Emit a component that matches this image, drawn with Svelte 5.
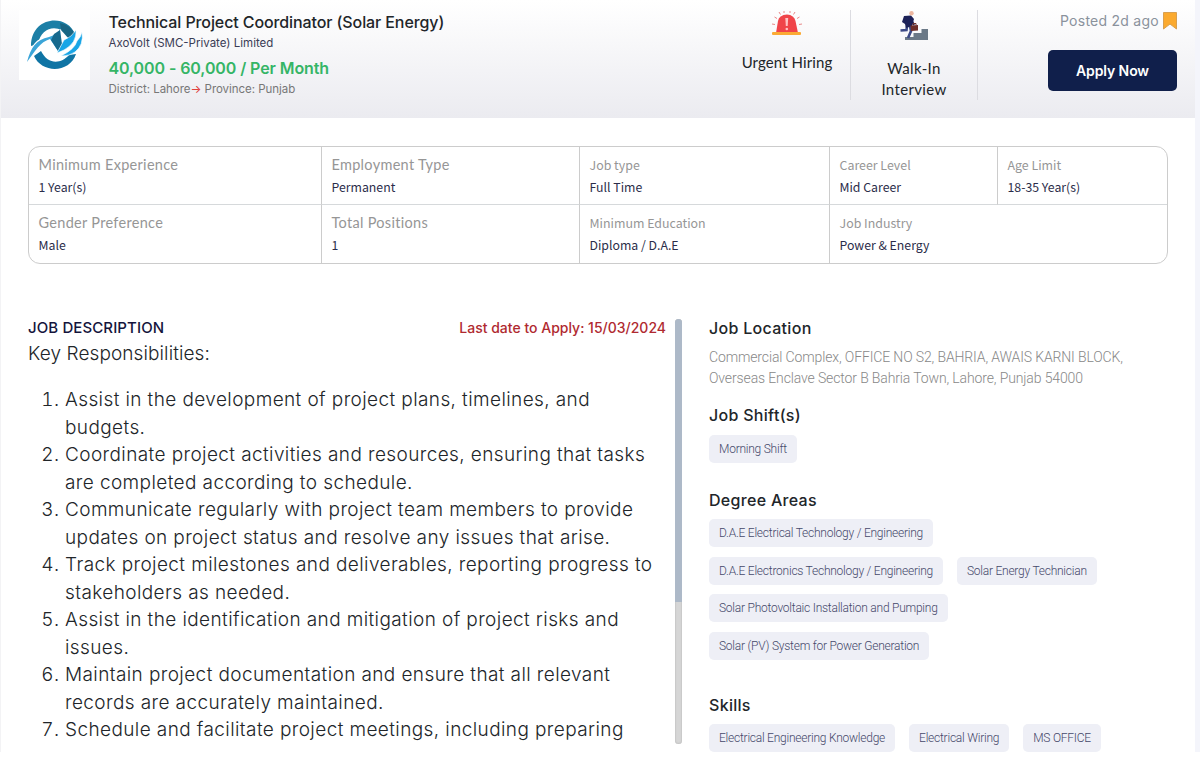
<script>
	const facts = [
		{ label: 'Minimum Experience', value: '1 Year(s)', wide: true },
		{ label: 'Employment Type', value: 'Permanent', wide: true },
		{ label: 'Job type', value: 'Full Time' },
		{ label: 'Career Level', value: 'Mid Career' },
		{ label: 'Age Limit', value: '18-35 Year(s)' },
		{ label: 'Gender Preference', value: 'Male', wide: true },
		{ label: 'Total Positions', value: '1', wide: true },
		{ label: 'Minimum Education', value: 'Diploma / D.A.E' },
		{ label: 'Job Industry', value: 'Power & Energy', last: true }
	]

	const duties = [
		['Assist in the development of project plans, timelines, and', 'budgets.'],
		['Coordinate project activities and resources, ensuring that tasks', 'are completed according to schedule.'],
		['Communicate regularly with project team members to provide', 'updates on project status and resolve any issues that arise.'],
		['Track project milestones and deliverables, reporting progress to', 'stakeholders as needed.'],
		['Assist in the identification and mitigation of project risks and', 'issues.'],
		['Maintain project documentation and ensure that all relevant', 'records are accurately maintained.'],
		['Schedule and facilitate project meetings, including preparing']
	]

	const degrees = [
		['D.A.E Electrical Technology / Engineering'],
		['D.A.E Electronics Technology / Engineering', 'Solar Energy Technician'],
		['Solar Photovoltaic Installation and Pumping'],
		['Solar (PV) System for Power Generation']
	]

	const skills = ['Electrical Engineering Knowledge', 'Electrical Wiring', 'MS OFFICE']
</script>

<style>
	:global(body) {
		background: #fff;
	}
	.page {
		border-left: 1px solid #f3f3f5;
		border-right: 5px solid #f4f5fb;
		box-sizing: border-box;
		color: #212529;
		font-family: Inter, sans-serif;
		height: 752px;
		overflow: hidden;
		width: 1200px;
	}

	header {
		background: linear-gradient(#fff, #ebebf0);
		box-sizing: border-box;
		display: flex;
		height: 118px;
		padding: 10px 18px 0;
	}
	.logo {
		background: #fff;
		height: 70px;
		width: 71px;
	}
	.summary {
		flex: 1;
		padding-left: 18.5px;
		white-space: nowrap;
	}
	h1 {
		font-size: 16px;
		font-weight: 500;
		letter-spacing: -.1px;
		line-height: 25px;
		margin: 0;
	}
	.company {
		color: #3b3c55;
		font-size: 11.5px;
		line-height: 16px;
	}
	.salary {
		color: #35b566;
		font-size: 16px;
		font-weight: 600;
		letter-spacing: -.1px;
		line-height: 35px;
	}
	.place {
		color: #777;
		font-size: 11.5px;
		letter-spacing: -.04px;
		line-height: 6px;
	}
	.place span {
		color: #e0403c;
	}
	.tag {
		border-right: 1px solid #dcdce1;
		box-sizing: border-box;
		font-family: Lato, sans-serif;
		font-size: 15px;
		height: 90px;
		letter-spacing: .35px;
		line-height: 21px;
		text-align: center;
		width: 127px;
	}
	.tag svg {
		display: block;
		margin: 0 auto 16px;
	}
	.urgent {
		letter-spacing: .1px;
	}
	.urgent svg {
		margin-bottom: 10px;
	}
	.apply {
		display: flex;
		flex-direction: column;
		width: 199px;
	}
	.posted {
		align-items: center;
		color: #8a929c;
		display: flex;
		font-size: 14px;
		gap: 4px;
		height: 21px;
		justify-content: flex-end;
		letter-spacing: .26px;
	}
	button {
		background: #101f4b;
		border: 0;
		border-radius: 5px;
		color: #fff;
		font: 600 14px Inter, sans-serif;
		height: 41px;
		letter-spacing: -.1px;
		margin: 18.5px 0 0 70px;
		width: 129px;
	}

	.facts {
		border: 1px solid #ccc;
		border-radius: 12px;
		box-sizing: border-box;
		display: grid;
		grid-template-columns: 293px 258px 250px 168px 1fr;
		grid-template-rows: 58px 58px;
		height: 118px;
		margin: 28px 27px 0 27px;
		overflow: hidden;
	}
	.fact {
		border-right: 1px solid #ccc;
		box-sizing: border-box;
		font-family: "Noto Sans CJK SC", sans-serif;
		padding: 7px 0 0 9.5px;
	}
	.fact:nth-child(-n + 5) {
		border-bottom: 1px solid #d6d9db;
	}
	.fact:nth-child(5) {
		border-right: 0;
	}
	.fact.last {
		border-right: 0;
		grid-column: span 2;
	}
	.label {
		color: #969696;
		font-size: 12.4px;
		line-height: 22px;
	}
	.wide .label {
		font-family: Lato, sans-serif;
		font-size: 14.5px;
		letter-spacing: .3px;
	}
	.value {
		color: #2b2d4a;
		font-size: 12.3px;
		line-height: 22px;
	}

	.details {
		display: flex;
		margin-top: 55px;
		padding-left: 27px;
	}
	.description {
		display: flex;
		height: 425px;
		overflow: hidden;
		width: 654px;
	}
	.text {
		width: 647px;
	}
	.title {
		display: flex;
		justify-content: space-between;
		line-height: 18px;
		padding-right: 9px;
	}
	.title h2 {
		color: #14143c;
		font-size: 15px;
		font-weight: 500;
		letter-spacing: .1px;
		line-height: 18px;
		margin: 0;
	}
	.title span {
		color: #b02a30;
		font-size: 14px;
		font-weight: 500;
	}
	.text p {
		font-size: 19px;
		font-weight: 300;
		letter-spacing: .1px;
		line-height: 27px;
		margin: 3px 0 19px;
	}
	ol {
		font-size: 19px;
		font-weight: 300;
		letter-spacing: .4px;
		line-height: 27.5px;
		margin: 0;
		padding-left: 37px;
		white-space: nowrap;
	}
	.scrollbar {
		background: #d6d6d6;
		border-radius: 4px;
		box-shadow: inset 0 0 2px #aaa;
		width: 7px;
	}
	.thumb {
		background: #adb9c8;
		border-radius: 4px 4px 0 0;
		height: 283px;
	}

	aside {
		margin-top: -1px;
		padding-left: 27px;
	}
	aside h3 {
		font-size: 16px;
		font-weight: 500;
		letter-spacing: .3px;
		line-height: 20px;
		margin: 0;
	}
	aside p {
		color: #888;
		font-family: Roboto, sans-serif;
		font-size: 14px;
		font-weight: 300;
		letter-spacing: -.13px;
		line-height: 21px;
		margin: 9px 0 16px;
	}
	.chips {
		display: flex;
		gap: 14px;
		margin-bottom: 9.5px;
	}
	.chip {
		background: #eeeff6;
		border-radius: 5px;
		color: #45486a;
		font: 300 12px/28px Roboto, sans-serif;
		height: 28px;
		letter-spacing: -.24px;
		padding: 0 10px;
		white-space: nowrap;
	}
	h3 + .chips {
		margin-top: 9.5px;
	}
	.gap {
		height: 17.5px;
	}
	.gap.large {
		height: 25.5px;
	}
</style>

<div class="page">
	<header>
		<svg class="logo" viewBox="0 0 71 70">
			<path d="M12 36C12 6 48 3 56 24L49 27C41 13 22 16 19 34Z" fill="#1c7fa6" />
			<path d="M41 13Q52 15 56 25L50 29L42 20Z" fill="#176583" />
			<path d="M15 46L22 41C29 55 42 54 50 45L57 44C51 63 23 64 15 46Z" fill="#0f74a4" />
			<path d="M7 54C11 38 15 29 29 26Q37 24 42 19L44 36L40 43L31 31C20 34 15 43 7 54Z" fill="#fff" />
			<path d="M8 52C12 37 17 30 30 27Q37 25 41 20L42 34L39 41L31 29C21 32 16 41 8 52Z" fill="#3ba5d8" />
			<path d="M35 24L41 20L43 34L39 41L32 30Z" fill="#17698d" />
			<path d="M57 20Q58 33 45 40L38 43L45 30Q53 27 57 20Z" fill="#18a5e6" stroke="#fff" stroke-width=".6" />
			<path d="M63 22Q65 35 56 42Q51 46 42 46Q56 39 58 31Q62 27 63 22Z" fill="#18a5e6" stroke="#fff" stroke-width=".6" />
		</svg>
		<div class="summary">
			<h1>Technical Project Coordinator (Solar Energy)</h1>
			<div class="company">AxoVolt (SMC-Private) Limited</div>
			<div class="salary">40,000 - 60,000 / Per Month</div>
			<div class="place">District: Lahore<span>→</span> Province: Punjab</div>
		</div>
		<div class="tag urgent">
			<svg width="32" height="32" viewBox="0 0 32 32">
				<path d="M5 23L7 11Q8 5 16 4.500Q23 5 24.500 11L27 23Z" fill="#f04449" />
				<path d="M14.300 8H17.200L16.700 16H14.800Z" fill="#ffc3c3" />
				<circle cx="15.800" cy="19" r="1.300" fill="#ffc3c3" />
				<rect x="1" y="22" width="29" height="3" rx="1" fill="#fbaa35" />
				<path d="M1 14L4 14.500M3.500 7L6 8.500M8 2L9.500 4.500M13 1V3M19 1V3M24 2L22.500 4.500M28.500 7L26 8.500M31 14L28 14.500" stroke="#e88a8a" />
			</svg>
			Urgent Hiring
		</div>
		<div class="tag">
			<svg width="32" height="32" viewBox="0 0 32 32">
				<path d="M7 30V27H15.500V23H23.500V19H30V30Z" fill="#6b7987" />
				<path d="M12 16L13 21L10 28M9 16L8.500 20L2.500 20.500" fill="none" stroke="#3c4a86" stroke-width="2.600" />
				<path d="M6 6L13 5.500L16 9L14 16L8 18L7 14L4 12Z" fill="#1c2158" />
				<path d="M13 9L16 15" stroke="#1c2158" stroke-width="2" />
				<circle cx="13.500" cy="3.200" r="2.200" fill="#edb7a0" />
				<path d="M12.500 15.500L20 15V20.500L13 21Z" fill="#6e2e29" />
				<path d="M15 15V13.500H18V15" fill="none" stroke="#6e2e29" />
			</svg>
			Walk-In<br />Interview
		</div>
		<div class="apply">
			<div class="posted">
				Posted 2d ago
				<svg width="14" height="18" viewBox="0 0 14 18"><path d="M.5.5H13.500V17L7 12L.5 17Z" fill="#fbaa2f" stroke="#d9a050" /></svg>
			</div>
			<button>Apply Now</button>
		</div>
	</header>

	<section class="facts">
		{#each facts as fact}
			<div class="fact" class:wide={fact.wide} class:last={fact.last}>
				<div class="label">{fact.label}</div>
				<div class="value">{fact.value}</div>
			</div>
		{/each}
	</section>

	<div class="details">
		<section class="description">
			<div class="text">
				<div class="title">
					<h2>JOB DESCRIPTION</h2>
					<span>Last date to Apply: 15/03/2024</span>
				</div>
				<p>Key Responsibilities:</p>
				<ol>
					{#each duties as lines}
						<li>{lines[0]}{#if lines[1]}<br />{lines[1]}{/if}</li>
					{/each}
				</ol>
			</div>
			<div class="scrollbar"><div class="thumb"></div></div>
		</section>

		<aside>
			<h3>Job Location</h3>
			<p>Commercial Complex, OFFICE NO S2, BAHRIA, AWAIS KARNI BLOCK,<br />Overseas Enclave Sector B Bahria Town, Lahore, Punjab 54000</p>
			<h3>Job Shift(s)</h3>
			<div class="chips"><span class="chip">Morning Shift</span></div>
			<div class="gap"></div>
			<h3>Degree Areas</h3>
			{#each degrees as row}
				<div class="chips">
					{#each row as name}<span class="chip">{name}</span>{/each}
				</div>
			{/each}
			<div class="gap large"></div>
			<h3>Skills</h3>
			<div class="chips">
				{#each skills as name}<span class="chip">{name}</span>{/each}
			</div>
		</aside>
	</div>
</div>
